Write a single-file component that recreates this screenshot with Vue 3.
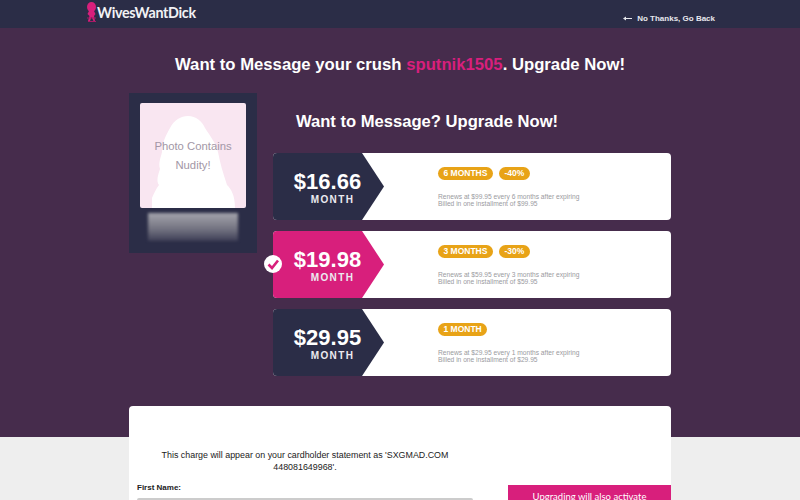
<template>
  <div class="page">
    <header class="topbar">
      <a class="logo">
        <svg class="logo-icon" width="12" height="22" viewBox="0 0 12 22">
          <ellipse cx="5.5" cy="6" rx="4.5" ry="5" fill="#d81f7c" />
          <path d="M3 10 L8 10 L9.5 13 L8 15 L9 20 L7.5 20 L5.5 16 L4 20 L2 20 L3.5 15 L1.5 13 Z" fill="#d81f7c" />
          <path d="M1 17 L10 17 M2 20.5 L10 20.5" stroke="#a81a66" stroke-width="1" />
        </svg>
        <span class="logo-text">WivesWantDick</span>
      </a>
      <a class="back">
        <svg width="9" height="5" viewBox="0 0 9 5">
          <path d="M0 2.5 L3 .5 V2 H9 V3 H3 V4.5 Z" fill="#e8e8ee" />
        </svg>
        No Thanks, Go Back
      </a>
    </header>

    <section class="hero">
      <h1>Want to Message your crush <span class="pink">sputnik1505</span>. Upgrade Now!</h1>
      <div class="columns">
        <div class="profile">
          <div class="photo">
            <svg class="silhouette" viewBox="0 0 106 105" preserveAspectRatio="none">
              <path d="M12 105 L12 95 C14 90 16 86 19 82 C16 78 18 72 20 66 C18 60 21 54 22 49 C22 40 26 32 30 25 C34 17 41 13 48 13 C56 13 62 18 65 25 C70 33 76 40 78 49 C80 60 83 70 87 82 C91 86 95 92 95 105 Z" fill="#fff" />
            </svg>
            <p class="photo-text">Photo Contains<br />Nudity!</p>
          </div>
          <div class="blurred-name"></div>
        </div>

        <div class="plans">
          <h2>Want to Message? Upgrade Now!</h2>
          <div v-for="plan in plans" :key="plan.price" class="plan">
            <div class="tag" :class="{ selected: plan.selected }">
              <span class="price">{{ plan.price }}</span>
              <span class="per">MONTH</span>
            </div>
            <span v-if="plan.selected" class="check">
              <svg width="18" height="18" viewBox="0 0 18 18">
                <circle cx="9" cy="9" r="9" fill="#fff" />
                <path d="M4.5 9.5 L8 13 L14 5.5" fill="none" stroke="#d81f7c" stroke-width="2.6" />
              </svg>
            </span>
            <div class="info">
              <div class="badges">
                <span class="badge">{{ plan.term }}</span>
                <span v-if="plan.off" class="badge">{{ plan.off }}</span>
              </div>
              <p class="terms">
                Renews at {{ plan.total }} every {{ plan.months }} months after expiring<br />
                Billed in one installment of {{ plan.total }}
              </p>
            </div>
          </div>
        </div>
      </div>
    </section>

    <section class="lower">
      <div class="pay-card">
        <div class="form-col">
          <p class="statement">This charge will appear on your cardholder statement as 'SXGMAD.COM 448081649968'.</p>
          <label class="field-label">First Name:</label>
          <input class="field" type="text" />
        </div>
        <div class="activate">Upgrading will also activate</div>
      </div>
    </section>
  </div>
</template>

<script setup>
const plans = [
  { price: '$16.66', term: '6 MONTHS', off: '-40%', total: '$99.95', months: 6 },
  { price: '$19.98', term: '3 MONTHS', off: '-30%', total: '$59.95', months: 3, selected: true },
  { price: '$29.95', term: '1 MONTH', off: '', total: '$29.95', months: 1 }
]
</script>

<style>
html,
body {
  margin: 0;
  background: #eeeeee;
  overflow: hidden;
}
</style>

<style scoped>
.page {
  height: 500px;
  overflow: hidden;
  font-family: "Liberation Sans", Arial, sans-serif;
}

.topbar {
  height: 28px;
  background: #2b2d47;
  display: flex;
  justify-content: space-between;
  padding: 0 85px 0 86px;
  color: #fff;
}

.logo {
  display: flex;
  align-items: flex-start;
  padding-top: 1px;
}

.logo-text {
  font-family: "Lato", sans-serif;
  font-size: 14.3px;
  font-weight: 700;
  letter-spacing: -0.3px;
  color: #f2f2f5;
  margin-top: 3px;
  margin-left: -1px;
}

.back {
  display: flex;
  align-items: center;
  gap: 5px;
  font-size: 8px;
  font-weight: 700;
  color: #e8e8ee;
  padding-top: 8px;
}

.hero {
  height: 409px;
  background: #462c4c;
  box-sizing: border-box;
  padding-top: 27px;
}

h1 {
  margin: 0;
  text-align: center;
  font-size: 16.7px;
  line-height: 20px;
  font-weight: 700;
  color: #fff;
}

.pink {
  color: #d81f7c;
}

.columns {
  width: 542px;
  margin: 18px auto 0;
  display: flex;
  gap: 16px;
}

.profile {
  width: 128px;
  height: 160px;
  flex: none;
  background: #2b2d47;
  box-sizing: border-box;
  padding: 10px 11px;
}

.photo {
  position: relative;
  height: 105px;
  background: #f9e6f1;
  border-radius: 2px;
  overflow: hidden;
}

.silhouette {
  position: absolute;
  inset: 0;
  width: 100%;
  height: 100%;
}

.photo-text {
  position: relative;
  margin: 0;
  padding-top: 34px;
  text-align: center;
  font-size: 11.3px;
  line-height: 19px;
  color: #a397a6;
}

.blurred-name {
  height: 28px;
  margin: 5px 8px 0;
  background: linear-gradient(#a4a4ac, #70707e 60%, #3d3e56);
  filter: blur(1.5px);
}

.plans {
  flex: 1;
  min-width: 0;
}

h2 {
  margin: 19px 0 21px;
  padding-right: 90px;
  text-align: center;
  font-size: 16.6px;
  line-height: 20px;
  font-weight: 700;
  color: #fff;
}

.plan {
  position: relative;
  height: 67px;
  margin-bottom: 11px;
  background: #fff;
  border-radius: 4px;
  display: flex;
}

.tag {
  width: 111px;
  flex: none;
  padding-right: 22px;
  box-sizing: border-box;
  background: #2b2d47;
  border-radius: 4px 0 0 4px;
  clip-path: polygon(0 0, 89px 0, 100% 50%, 89px 100%, 0 100%);
  color: #fff;
  display: flex;
  flex-direction: column;
  align-items: center;
  justify-content: center;
}

.tag.selected {
  background: #d81f7c;
}

.price {
  font-size: 22px;
  line-height: 24px;
  font-weight: 700;
  padding-left: 20px;
  padding-top: 1px;
}

.per {
  font-size: 10px;
  line-height: 11px;
  letter-spacing: 1.4px;
  font-weight: 700;
  padding-left: 30px;
  color: #eceaf0;
}

.check {
  position: absolute;
  left: -9px;
  top: 24px;
  height: 18px;
}

.info {
  padding: 14px 0 0 54px;
}

.badges {
  display: flex;
  gap: 6px;
}

.badge {
  height: 13px;
  line-height: 13px;
  padding: 0 5.5px;
  border-radius: 7px;
  background: #e8a317;
  color: #fff;
  font-size: 8.5px;
  font-weight: 700;
}

.terms {
  margin: 13px 0 0;
  font-size: 6.67px;
  line-height: 7px;
  color: #9a9aa0;
}

.lower {
  height: 63px;
  background: #eeeeee;
}

.pay-card {
  width: 542px;
  height: 94px;
  margin: 0 auto;
  position: relative;
  top: -31px;
  background: #fff;
  border-radius: 4px 4px 0 0;
  display: flex;
  justify-content: space-between;
  align-items: flex-start;
  overflow: hidden;
}

.form-col {
  width: 336px;
  margin-left: 8px;
  padding-top: 43px;
}

.statement {
  margin: 0 0 10px;
  padding: 0 20px;
  text-align: center;
  font-size: 8.9px;
  line-height: 12px;
  color: #222;
}

.field-label {
  display: block;
  font-size: 8px;
  line-height: 10px;
  font-weight: 700;
  color: #222;
  margin-bottom: 5px;
}

.field {
  display: block;
  width: 100%;
  height: 24px;
  box-sizing: border-box;
  border: 1px solid #ccc;
  border-top-width: 2px;
  border-radius: 2px;
  background: #fff;
}

.activate {
  width: 163px;
  height: 60px;
  margin-top: 79px;
  background: #d81f7c;
  color: #fff;
  font-family: "Lato", sans-serif;
  font-size: 9.5px;
  line-height: 24px;
  text-align: center;
}
</style>
